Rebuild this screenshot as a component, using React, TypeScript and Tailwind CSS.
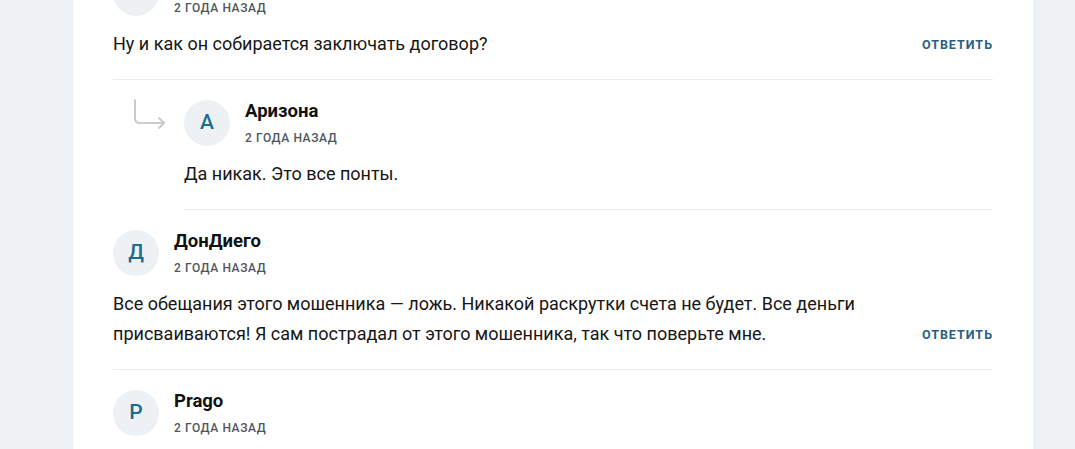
import React from "react"

type Comment = {
  initial: string
  name: string
  text: string
  reply?: boolean
  showReply?: boolean
  last?: boolean
}

const comments: Comment[] = [
  { initial: "", name: "", text: "Ну и как он собирается заключать договор?", showReply: true },
  { initial: "А", name: "Аризона", text: "Да никак. Это все понты.", reply: true },
  {
    initial: "Д",
    name: "ДонДиего",
    text: "Все обещания этого мошенника — ложь. Никакой раскрутки счета не будет. Все деньги присваиваются! Я сам пострадал от этого мошенника, так что поверьте мне.",
    showReply: true,
  },
  { initial: "P", name: "Prago", text: "", last: true },
]

function ReplyArrow() {
  return (
    <svg width="34" height="34" viewBox="0 0 34 34" fill="none" className="shrink-0 mt-[-2px]">
      <path d="M2 2 V20 Q2 25 7 25 H31" stroke="#c8cccf" strokeWidth="2" strokeLinecap="round" />
      <path d="M26 20 L31 25 L26 30" stroke="#c8cccf" strokeWidth="2" strokeLinecap="round" strokeLinejoin="round" />
    </svg>
  )
}

function CommentItem({ c, first }: { c: Comment; first: boolean }) {
  return (
    <div className={`flex ${c.reply ? "pl-[20px]" : ""} ${first ? "mt-[-50px]" : ""}`}>
      {c.reply && (
        <div className="w-[51px] pt-[20px]">
          <ReplyArrow />
        </div>
      )}
      <div className={`flex-1 pt-[20px] ${c.last ? "" : "pb-[20px] border-b border-[#eaedf0]"}`}>
        <div className="flex items-start gap-[15px]">
          <div className="w-[46px] h-[46px] rounded-full bg-[#eef1f4] flex items-center justify-center text-[21px] font-medium text-[#1d6c8e]">
            {c.initial}
          </div>
          <div className="flex flex-col">
            <div className="h-[22px] text-[18.5px] leading-[22px] font-bold text-[#111]">{c.name}</div>
            <div className="mt-[8px] text-[12px] leading-[16px] font-medium tracking-[0.6px] text-[#50565c]">
              2 ГОДА НАЗАД
            </div>
          </div>
        </div>
        {c.text && (
          <div className="mt-[13px] flex items-end gap-[40px]">
            <p className="flex-1 text-[18px] leading-[30px] text-[#161616]">{c.text}</p>
            {c.showReply && (
              <span className="mb-[-1px] text-[12.5px] leading-[30px] font-bold tracking-[1px] text-[#2b5f7f]">
                ОТВЕТИТЬ
              </span>
            )}
          </div>
        )}
      </div>
    </div>
  )
}

export default function App() {
  return (
    <div className="h-[449px] overflow-hidden bg-[#eff2f4]" style={{ fontFamily: "Roboto, 'Noto Sans', sans-serif" }}>
      <div className="ml-[73px] w-[960px] h-full bg-white px-[40px] overflow-hidden">
        {comments.map((c, i) => (
          <CommentItem key={i} c={c} first={i === 0} />
        ))}
      </div>
    </div>
  )
}
